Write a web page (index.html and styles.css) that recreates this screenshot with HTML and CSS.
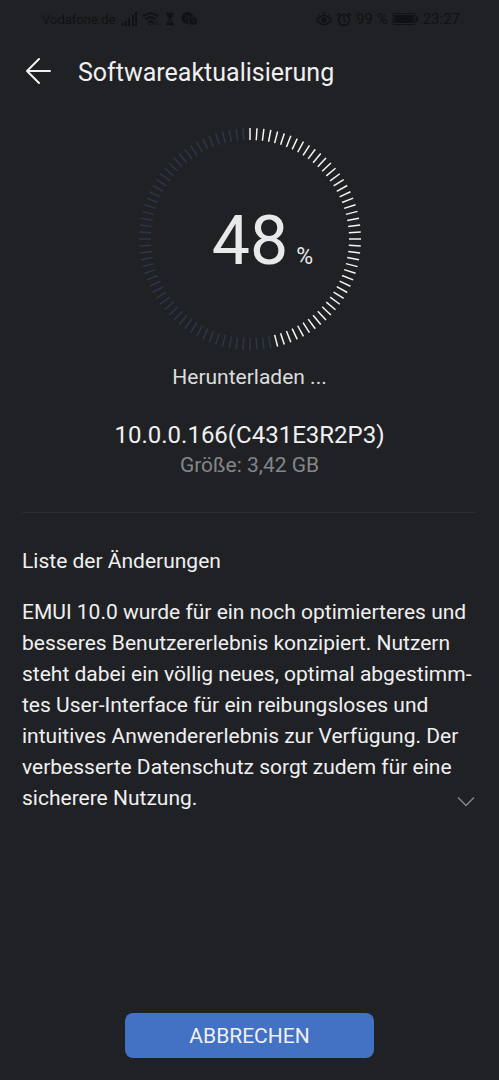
FILE: index.html
```html
<!DOCTYPE html>
<html lang="de">
<head>
  <meta charset="UTF-8" />
  <meta name="viewport" content="width=device-width, initial-scale=1.0"/>
  <title>Softwareaktualisierung</title>
  <link rel="stylesheet" href="styles.css">
</head>
<body>
  <div class="status-bar">
    <div class="status-left">
      <span class="carrier">Vodafone.de</span>
      <svg width="17" height="16" viewBox="0 0 17 16" fill="currentColor">
        <rect x="0" y="12" width="2" height="3"/>
        <rect x="3" y="10" width="2" height="5"/>
        <rect x="6" y="7" width="2" height="8"/>
        <rect x="10" y="4" width="2" height="11"/>
        <rect x="13" y="1" width="2" height="14"/>
      </svg>
      <svg width="17" height="16" viewBox="0 0 17 16" fill="none" stroke="currentColor" stroke-width="2">
        <path d="M1 5.500Q8.500-1 16 5.500M3.500 8.500Q8.500 4 13.500 8.500M6 11.500Q8.500 9.500 11 11.500"/>
        <circle cx="8" cy="13.500" r="1" fill="currentColor" stroke="none"/>
        <path d="M12 10v4M10.500 12.500l1.500 1.500M15 14v-4" stroke-width="1"/>
      </svg>
      <svg class="hourglass" width="10" height="16" viewBox="0 0 10 16">
        <path d="M1 2.500h8M1 13.500h8" fill="none" stroke="currentColor" stroke-width="1.500"/>
        <path d="M2 3h6v2L5.500 8 8 11v2H2v-2l2.500-3L2 5z" fill="currentColor"/>
        <path d="M5 9l2 2.500H3z" fill="#202125"/>
      </svg>
      <svg width="18" height="16" viewBox="0 0 18 16">
        <circle cx="6.500" cy="7" r="6" fill="currentColor"/>
        <path d="M4 4l2 2-2 3M8 3l-1 3 2 1" fill="none" stroke="#202125"/>
        <circle cx="12" cy="10" r="4.500" fill="currentColor" stroke="#202125"/>
        <path d="M12 8v3h2" fill="none" stroke="#202125"/>
      </svg>
    </div>
    <div class="status-right">
      <svg width="16" height="16" viewBox="0 0 16 16" fill="none" stroke="currentColor" stroke-width="1.500">
        <path d="M1 9q7-9 14 0q-7 9-14 0zM3 5L2 3M8 3.500V1M13 5l1-2"/>
        <circle cx="8" cy="9" r="2" fill="currentColor"/>
      </svg>
      <svg width="16" height="16" viewBox="0 0 16 16" fill="none" stroke="currentColor" stroke-width="1.500">
        <circle cx="8" cy="9" r="5.500"/>
        <path d="M8 5.500V9l2 2M1 4.500L4 2M15 4.500L12 2"/>
      </svg>
      <span>99 %</span>
      <svg class="battery" width="27" height="16" viewBox="0 0 27 16">
        <rect x="1" y="2.500" width="22" height="11" rx="1" fill="none" stroke="currentColor"/>
        <rect x="2.500" y="4" width="19" height="8" fill="currentColor"/>
        <path d="M25 5.500v5" stroke="currentColor" stroke-width="2"/>
      </svg>
      <span>23:27</span>
    </div>
  </div>

  <header>
    <button class="back" aria-label="Zurück">
      <svg width="28" height="28" viewBox="0 0 28 28" fill="none" stroke="currentColor" stroke-width="2" stroke-linecap="round" stroke-linejoin="round">
        <path d="M15 1L3 13l12 12M3 13h23"/>
      </svg>
    </button>
    <h1>Softwareaktualisierung</h1>
  </header>

  <main>
    <div class="progress">
      <svg id="dial" viewBox="-112 -112 224 224"></svg>
      <div class="percent"><span class="number">48</span><span class="sign">%</span></div>
    </div>
    <p class="state">Herunterladen ...</p>
    <p class="version">10.0.0.166(C431E3R2P3)</p>
    <p class="size">Größe: 3,42 GB</p>

    <section class="changes">
      <h2>Liste der Änderungen</h2>
      <p>EMUI 10.0 wurde für ein noch optimierteres und<br>
        besseres Benutzererlebnis konzipiert. Nutzern<br>
        steht dabei ein völlig neues, optimal abgestimm-<br>
        tes User-Interface für ein reibungsloses und<br>
        intuitives Anwendererlebnis zur Verfügung. Der<br>
        verbesserte Datenschutz sorgt zudem für eine<br>
        sicherere Nutzung.</p>
      <button class="expand" aria-label="Mehr anzeigen">
        <svg width="18" height="12" viewBox="0 0 18 12" fill="none" stroke="currentColor" stroke-width="1.500">
          <path d="M1 1.500l8 8 8-8"/>
        </svg>
      </button>
    </section>
  </main>

  <footer>
    <button class="cancel">ABBRECHEN</button>
  </footer>

  <script>
    const TICKS = 100;
    const DONE = 47;
    let lines = "";
    for (let i = 0; i < TICKS; i++) {
      lines += `<line class="${i < DONE ? "on" : "off"}" y1="-111" y2="-99" transform="rotate(${i * 360 / TICKS})"/>`;
    }
    document.getElementById("dial").innerHTML = lines;
  </script>
</body>
</html>
```
FILE: styles.css
```css
* {
  box-sizing: border-box;
}
body {
  margin: 0;
  min-height: 100vh;
  display: flex;
  flex-direction: column;
  background-color: #202125;
  color: #f0f0f1;
  font-family: Roboto, "Liberation Sans", sans-serif;
}
h1, h2, p {
  margin: 0;
  font-weight: normal;
}
button {
  border: none;
  padding: 0;
  background: none;
  font-family: inherit;
  cursor: pointer;
}
svg {
  display: block;
  flex: none;
}
.status-bar {
  display: flex;
  justify-content: space-between;
  height: 38px;
  padding: 0 39px 0 42px;
  color: #101114;
  font-size: 15px;
}
.status-left, .status-right {
  display: flex;
  align-items: center;
  gap: 4px;
}
.status-left {
  gap: 3px;
}
.carrier {
  font-size: 13px;
  margin-right: 4px;
}
.hourglass {
  margin: 0 3px;
}
header {
  display: flex;
  align-items: center;
  gap: 26px;
  height: 68px;
  padding: 0 24px;
}
.back {
  color: #f0f0f1;
}
h1 {
  font-size: 25px;
}
main {
  display: flex;
  flex-direction: column;
  align-items: center;
  padding: 21px 22px 0;
}
.progress {
  position: relative;
  width: 224px;
  height: 224px;
}
.on, .off {
  stroke: #f4f5f6;
  stroke-width: 1.5;
}
.off {
  stroke: #2b3649;
}
.percent {
  position: absolute;
  inset: 0;
  display: flex;
  justify-content: center;
  align-items: baseline;
  gap: 8px;
  padding-left: 26px;
  line-height: 228px;
  color: #e9e9ea;
}
.number {
  font-size: 68px;
}
.sign {
  font-size: 23px;
}
.state {
  margin-top: 12px;
  font-size: 21px;
  line-height: 28px;
  color: #dcdddd;
}
.version {
  margin-top: 28px;
  font-size: 24px;
  line-height: 32px;
}
.size {
  font-size: 21px;
  line-height: 28px;
  color: #85868a;
}
.changes {
  position: relative;
  width: 100%;
  margin-top: 33px;
  padding-top: 34px;
  border-top: 1px solid #2b2c30;
}
h2, .changes p {
  font-size: 21px;
  line-height: 28px;
}
.changes p {
  margin-top: 22px;
  line-height: 31px;
}
.expand {
  position: absolute;
  right: 2px;
  bottom: 6px;
  color: #85868a;
}
footer {
  margin-top: auto;
  padding: 0 25% 22px;
}
.cancel {
  width: 100%;
  height: 45px;
  border-radius: 8px;
  background-color: #4371c4;
  color: #f0f0f1;
  font-size: 21px;
}
```
